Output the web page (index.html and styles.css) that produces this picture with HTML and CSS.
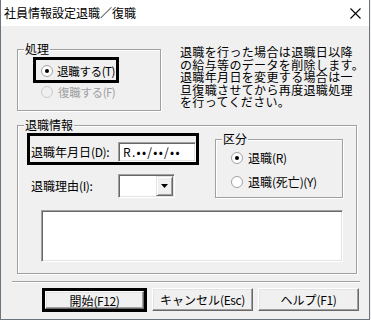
FILE: index.html
```html
<!DOCTYPE html>
<html lang="ja">
<head>
    <meta charset="UTF-8">
    <title>社員情報設定退職／復職</title>
    <link rel="stylesheet" href="styles.css">
</head>
<body>

<div class="window">
    <div class="titlebar">
        <span class="title">社員情報設定退職／復職</span>
        <svg class="close" width="11" height="11" viewBox="0 0 11 11">
            <path d="M0.5 0.5 L10.5 10.5 M10.5 0.5 L0.5 10.5" stroke="#000" stroke-width="1.1" fill="none"/>
        </svg>
    </div>

    <div class="client">
        <div class="top-row">
            <div class="group group-process">
                <span class="group-title">処理</span>
                <div class="focus-frame radio-focus">
                    <label class="radio">
                        <svg class="radio-mark" width="12" height="12" viewBox="0 0 12 12">
                            <circle cx="6" cy="6" r="5.5" fill="#fff" stroke="#a0a0a0"/>
                            <circle cx="6" cy="6" r="2" fill="#000"/>
                        </svg>
                        <span class="tight">退職する<span class="latin">(T)</span></span>
                    </label>
                </div>
                <label class="radio disabled radio-return">
                    <svg class="radio-mark" width="12" height="12" viewBox="0 0 12 12">
                        <circle cx="6" cy="6" r="5.5" fill="#f0f0f0" stroke="#c8c8c8"/>
                    </svg>
                    <span class="tight">復職する<span class="latin">(F)</span></span>
                </label>
            </div>
            <p class="note">
                退職を行った場合は退職日以降<br>
                の給与等のデータを削除します。<br>
                退職年月日を変更する場合は一<br>
                旦復職させてから再度退職処理<br>
                を行ってください。
            </p>
        </div>

        <div class="group group-info">
            <span class="group-title">退職情報</span>
            <div class="info-row">
                <div class="info-left">
                    <div class="focus-frame date-focus">
                        <span class="field-label">退職年月日<span class="latin">(D):</span></span>
                        <span class="edit date-edit">R.••/••/••</span>
                    </div>
                    <div class="reason-row">
                        <span class="field-label">退職理由<span class="latin">(I):</span></span>
                        <span class="edit combo">
                            <span class="combo-btn">
                                <svg width="7" height="4" viewBox="0 0 7 4"><path d="M0 0 H7 L3.5 4 Z" fill="#000"/></svg>
                            </span>
                        </span>
                    </div>
                </div>
                <div class="group group-kind">
                    <span class="group-title">区分</span>
                    <label class="radio">
                        <svg class="radio-mark" width="12" height="12" viewBox="0 0 12 12">
                            <circle cx="6" cy="6" r="5.5" fill="#fff" stroke="#a0a0a0"/>
                            <circle cx="6" cy="6" r="2" fill="#000"/>
                        </svg>
                        <span>退職<span class="latin">(R)</span></span>
                    </label>
                    <label class="radio">
                        <svg class="radio-mark" width="12" height="12" viewBox="0 0 12 12">
                            <circle cx="6" cy="6" r="5.5" fill="#fff" stroke="#a0a0a0"/>
                        </svg>
                        <span>退職<span class="latin">(</span>死亡<span class="latin">)(Y)</span></span>
                    </label>
                </div>
            </div>
            <div class="edit memo"></div>
        </div>

        <div class="separator"></div>

        <div class="buttons">
            <div class="focus-frame button-focus">
                <button>開始<span class="latin">(F12)</span></button>
            </div>
            <button>キャンセル<span class="latin">(Esc)</span></button>
            <button>ヘルプ<span class="latin">(F1)</span></button>
        </div>
    </div>
</div>

</body>
</html>
```

FILE: styles.css
```css
* {
    box-sizing: border-box;
}

body {
    margin: 0;
    font-family: "Noto Sans CJK JP", "Noto Sans", sans-serif;
    font-size: 12px;
    line-height: 14px;
    color: #000;
    background-color: #f0f0f0;
}

/* MS UI Gothic has narrow latin glyphs */
.latin {
    letter-spacing: -0.4px;
}

.tight {
    font-size: 11.5px;
    letter-spacing: -0.3px;
}

.tight .latin {
    letter-spacing: -0.6px;
}

.window {
    width: 370px;
    height: 320px;
    border: 1px solid #6b7580;
    border-top: none;
    background-color: #f0f0f0;
}

.titlebar {
    height: 26px;
    background-color: #fff;
    display: flex;
    align-items: center;
    padding-left: 3px;
}

.close {
    margin-left: auto;
    margin-right: 8px;
}

.client {
    padding: 23px 0 0 16px;
}

.top-row {
    display: flex;
    align-items: flex-start;
}

/* etched group frame */
.group {
    position: relative;
    border: 1px solid #a0a0a0;
    box-shadow: inset 1px 1px 0 #fff, 1px 1px 0 #fff;
}

.group-title {
    position: absolute;
    top: -8px;
    left: 6px;
    padding: 0 1px;
    background-color: #f0f0f0;
    line-height: 14px;
}

.group-process {
    width: 144px;
    height: 62px;
    padding: 7px 0 0 15px;
}

.focus-frame {
    border: 3px solid #000;
}

.radio {
    display: flex;
    align-items: center;
    gap: 5px;
    height: 14px;
    white-space: nowrap;
}

.radio-mark {
    flex: none;
}

.radio.disabled {
    color: #a0a0a0;
}

.radio-focus {
    width: 86px;
    height: 26px;
    display: flex;
    align-items: center;
    padding: 2px 0 0 5px;
}

.radio-focus .radio {
    gap: 4px;
}

.radio-return {
    margin: 2px 0 0 8px;
}

.note {
    margin: -3px 0 0 19px;
    line-height: 12.5px;
    letter-spacing: 0.35px;
    white-space: nowrap;
}

.group-info {
    width: 340px;
    height: 149px;
    margin-top: 14px;
    padding: 7px 0 0 9px;
}

.info-row {
    display: flex;
    align-items: flex-start;
}

.info-left {
    width: 172px;
}

.date-focus {
    height: 32px;
    display: flex;
    align-items: flex-end;
    padding-left: 1px;
}

.field-label {
    width: 87px;
    line-height: 20px;
    white-space: nowrap;
}

/* sunken edit */
.edit {
    background-color: #fff;
    border: 1px solid;
    border-color: #a0a0a0 #fff #fff #a0a0a0;
    box-shadow: inset 1px 1px 0 #696969, inset -1px -1px 0 #e3e3e3;
}

.date-edit {
    width: 78px;
    height: 20px;
    padding: 2px 0 0 4px;
    line-height: 14px;
    letter-spacing: 1.3px;
}

.reason-row {
    display: flex;
    align-items: center;
    margin: 9px 0 0 4px;
}

.combo {
    width: 57px;
    height: 24px;
    padding: 1px;
    display: flex;
    justify-content: flex-end;
}

.combo-btn {
    width: 17px;
    height: 100%;
    background-color: #f0f0f0;
    border: 1px solid;
    border-color: #e3e3e3 #696969 #696969 #e3e3e3;
    box-shadow: inset 1px 1px 0 #fff, inset -1px -1px 0 #a0a0a0;
    display: flex;
    align-items: center;
    justify-content: center;
}

.group-kind {
    width: 128px;
    height: 59px;
    margin: 6px 0 0 16px;
    padding: 11px 0 0 15px;
}

.group-kind .radio + .radio {
    margin-top: 10px;
}

.memo {
    width: 302px;
    height: 52px;
    margin: 12px 0 0 14px;
}

.separator {
    width: 348px;
    margin: 7px 0 0 -5px;
    border-top: 1px solid #a0a0a0;
    border-bottom: 1px solid #fff;
}

.buttons {
    display: flex;
    gap: 5px;
    margin: 5px 0 0 25px;
}

button {
    width: 101px;
    height: 23px;
    padding: 0;
    font-family: inherit;
    font-size: 12px;
    color: #000;
    background-color: #f0f0f0;
    border: 1px solid;
    border-color: #fff #696969 #696969 #fff;
    box-shadow: inset -1px -1px 0 #a0a0a0, inset 1px 1px 0 #e3e3e3;
}

.button-focus {
    width: 105px;
    height: 24px;
}

.button-focus button {
    width: 100%;
    height: 100%;
}
```
